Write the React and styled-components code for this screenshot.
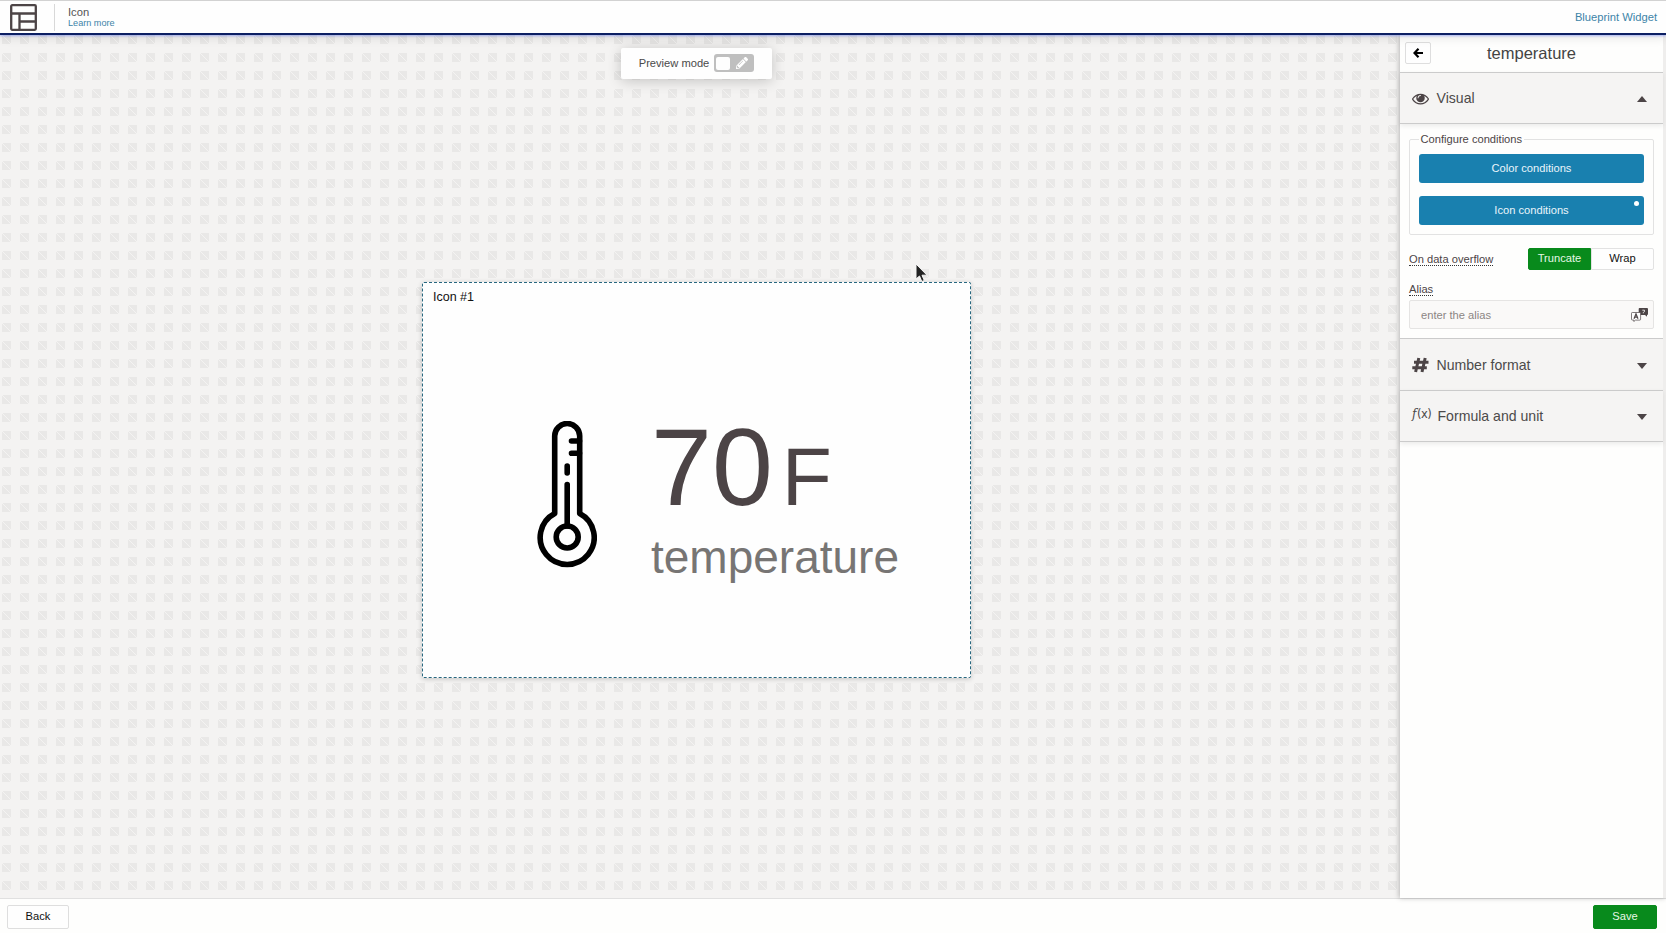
import React from "react";
import styled, { createGlobalStyle, css } from "styled-components";
import { FaPencilAlt } from "react-icons/fa";

const Global = createGlobalStyle`
  * { box-sizing: border-box; }
  body { margin: 0; overflow: hidden; font-family: "Liberation Sans", Arial, sans-serif; color: #4c4446; }
  button, input { font: inherit; }
`;

const Page = styled.div`
  display: flex;
  flex-direction: column;
  width: 100vw;
  height: 100vh;
  background: #fefefd;
`;

const Header = styled.header`
  position: relative;
  z-index: 3;
  display: flex;
  align-items: center;
  flex: none;
  height: 35px;
  padding: 0 9px 0 10px;
  background: #fefefe;
  border-top: 1px solid #d2d2d2;
  border-bottom: 2px solid #0c1f63;
  box-shadow: 0 1px 2px rgba(70, 100, 255, 0.4), 0 2px 10px rgba(0, 0, 0, 0.12);
`;

const Divider = styled.span`
  width: 1px;
  height: 27px;
  margin: 0 13px 0 17px;
  background: #d8d8d8;
`;

const Heading = styled.div`
  display: flex;
  flex: 1;
  flex-direction: column;
  padding-bottom: 1px;
  font-size: 11.2px;
  line-height: 12px;
  color: #555;
`;

const Link = styled.a`
  font-size: ${(p) => p.$size || 11.2}px;
  line-height: ${(p) => (p.$size ? 10 : 12)}px;
  color: #3d84a8;
`;

const Body = styled.div`
  display: flex;
  flex: 1;
  min-height: 0;
`;

const Canvas = styled.main`
  display: flex;
  flex: 1;
  flex-direction: column;
  align-items: center;
  padding: 13px 7px 0 0;
  background: #f4f3f2 url("data:image/svg+xml,%3Csvg xmlns='http://www.w3.org/2000/svg' width='18' height='18'%3E%3Cpath d='M0 0h9v9H0z' fill='%23e9e8e7'/%3E%3Cpath d='M0 0l9 9' stroke='%23f5f4f3' stroke-width='.9'/%3E%3C/svg%3E") 2px 0;
`;

const PreviewBar = styled.div`
  display: flex;
  align-items: center;
  height: 31px;
  padding: 0 17.5px;
  gap: 5px;
  font-size: 11.15px;
  color: #4a4a4a;
  background: #fefefe;
  border-radius: 2px;
  box-shadow: 0 2px 14px rgba(0, 0, 0, 0.2);
`;

const PreviewLabel = styled.span`
  padding-bottom: 2px;
`;

const Toggle = styled.span`
  display: flex;
  align-items: center;
  justify-content: space-between;
  width: 40px;
  height: 18px;
  margin-bottom: 1px;
  padding: 0 6px 0 2px;
  color: #fff;
  background: #bfbfbf;
  border-radius: 3px;
  &::before {
    content: "";
    width: 14px;
    height: 13px;
    background: #fefefe;
    border-radius: 2px;
  }
`;

const Card = styled.section`
  display: flex;
  flex-direction: column;
  width: 549px;
  height: 396px;
  margin-top: 203px;
  background: #fefefe;
  border: 1px dashed #27677f;
  border-radius: 2px;
  box-shadow: 0 1px 5px rgba(0, 0, 0, 0.2);
`;

const CardTitle = styled.div`
  padding: 7px 10px 0;
  font-size: 12.5px;
  line-height: 15px;
  color: #111;
`;

const Reading = styled.div`
  display: flex;
  padding: 116px 0 0 114px;
  gap: 54px;
`;

const Figures = styled.div`
  display: flex;
  flex-direction: column;
`;

const Amount = styled.div`
  display: flex;
  align-items: baseline;
  gap: 9px;
  height: 110px;
  font-size: 109.5px;
  line-height: 92px;
  color: #4c4446;
`;

const Unit = styled.span`
  font-size: 82px;
`;

const Caption = styled.div`
  font-size: 46px;
  line-height: 52px;
  color: #777574;
`;

const Sidebar = styled.aside`
  position: relative;
  z-index: 2;
  width: 266px;
  background: #fefefd;
  border-right: 3px solid #efeeed;
  box-shadow: -1px 0 5px rgba(0, 0, 0, 0.25);
`;

const PanelTitle = styled.div`
  display: flex;
  align-items: center;
  height: 37px;
  padding: 0 5px;
  font-size: 16.5px;
  color: #444;
  span { flex: 1; padding-right: 26px; text-align: center; }
`;

const BackArrow = styled.button`
  display: grid;
  place-items: center;
  width: 26px;
  height: 22px;
  margin-bottom: 1px;
  padding: 0;
  background: #fefefe;
  border: 1px solid #dedede;
  border-radius: 2px;
`;

const SectionHead = styled.div`
  display: flex;
  align-items: center;
  height: ${(p) => p.$height}px;
  padding: 0 15px 0 12px;
  font-size: 14.1px;
  color: #4c4a4a;
  background: #f5f4f3;
  border-top: 1px solid #cbcbcb;
  ${(p) => p.$last && css`
    border-bottom: 1px solid #cbcbcb;
    box-shadow: 0 2px 5px rgba(0, 0, 0, 0.08);
  `}
`;

const HeadIcon = styled.span`
  display: flex;
  flex: none;
  width: ${(p) => p.$width || 24.5}px;
`;

const Caret = styled.i`
  margin: 2px 1px 0 auto;
  border: 5px solid transparent;
  ${(p) => p.$up ? "border-top: 0; border-bottom: 6px solid #4c4446;" : "border-bottom: 0; border-top: 6px solid #4c4446;"}
`;

const Settings = styled.div`
  height: 214px;
  padding: 9px 9px 0;
  font-size: 11.15px;
`;

const Fieldset = styled.fieldset`
  display: flex;
  flex-direction: column;
  gap: 13px;
  height: 102px;
  margin: 0;
  padding: 8px 9px 0;
  border: 1px solid #e2e2e2;
  border-radius: 2px;
  legend { height: 13px; margin-left: 0; padding: 0 1.5px; line-height: 13px; }
`;

const ConditionButton = styled.button`
  position: relative;
  flex: none;
  height: 29px;
  padding: 0 0 2px;
  color: #e9f5fb;
  background: #1980af;
  border: 0;
  border-radius: 3px;
`;

const Dot = styled.span`
  position: absolute;
  top: 5px;
  right: 5px;
  width: 5px;
  height: 5px;
  background: #fff;
  border-radius: 50%;
`;

const Field = styled.div`
  display: flex;
  align-items: center;
  justify-content: space-between;
  height: 22px;
  margin-top: 13px;
`;

const Hint = styled.span`
  display: inline-block;
  line-height: 12px;
  border-bottom: 1px dotted #333;
`;

const Segments = styled.div`
  display: flex;
  width: 126px;
  height: 22px;
`;

const Segment = styled.button`
  flex: 1;
  padding: 0 0 2px;
  color: ${(p) => (p.$active ? "#e6f7e6" : "#111")};
  background: ${(p) => (p.$active ? "#088a1c" : "#fefefe")};
  border: 1px solid ${(p) => (p.$active ? "#088a1c" : "#e2e2e2")};
  border-radius: ${(p) => (p.$active ? "2px 0 0 2px" : "0 2px 2px 0")};
`;

const AliasLabel = styled.div`
  display: flex;
  height: 17px;
  margin-top: 13px;
`;

const AliasBox = styled.div`
  display: flex;
  align-items: center;
  height: 29px;
  padding: 0 5px 0 11px;
  background: #faf9f8;
  border: 1px solid #e5e4e3;
  border-radius: 2px;
`;

const AliasInput = styled.input`
  flex: 1;
  min-width: 0;
  padding: 0;
  background: none;
  border: 0;
  &::placeholder { color: #8c8684; opacity: 1; }
`;

const Footer = styled.footer`
  display: flex;
  flex: none;
  align-items: flex-start;
  justify-content: space-between;
  height: 35px;
  padding: 6px 9px 0 7px;
  background: #fefefd;
  border-top: 1px solid #e0e0e0;
`;

const FooterButton = styled.button`
  width: ${(p) => (p.$primary ? 64 : 62)}px;
  height: 24px;
  padding: 0 0 2px;
  font-size: 11.15px;
  color: ${(p) => (p.$primary ? "#e6f7e6" : "#111")};
  background: ${(p) => (p.$primary ? "#088a1c" : "#fefefe")};
  border: 1px solid ${(p) => (p.$primary ? "#088a1c" : "#dedede")};
  border-radius: 2px;
`;

const Pointer = styled.svg`
  position: fixed;
  z-index: 5;
  left: 915px;
  top: 263px;
`;

const LayoutLogo = () => (
  <svg width="27" height="27" viewBox="0 0 27 27" fill="none" stroke="#4c4446" strokeWidth="2.300">
    <rect x="1.200" y="1.200" width="24.600" height="24.600" rx="1" />
    <path d="M1 9.500h25M9.500 9.500V26M9.500 17.500H26" />
  </svg>
);

const Thermometer = () => (
  <svg width="60" height="147" viewBox="0 0 60 147" fill="none" stroke="#000" strokeWidth="5.600" strokeLinecap="round" strokeLinejoin="round">
    <path d="M17.700 92.500V15a12.500 12.500 0 0 1 25 0v77.500a27 27 0 1 1-25 0z" />
    <circle cx="30.200" cy="116" r="11" />
    <path d="M30.200 105V63.500M30.200 52v-7M42.500 32.300H34.500M42.500 20H34.500" />
  </svg>
);

const ArrowIcon = () => (
  <svg width="10" height="10" viewBox="0 0 10 10" fill="none" stroke="#000" strokeWidth="2.200">
    <path d="M5.500.8L1.500 5l4 4.200M1.500 5H10" />
  </svg>
);

const EyeIcon = () => (
  <svg width="17" height="17" viewBox="0 0 1792 1792" fill="#4c4446">
    <path d="M1664 960q-152-236-381-353 61 104 61 225 0 185-131.500 316.500t-316.500 131.500-316.500-131.500-131.500-316.500q0-121 61-225-229 117-381 353 133 205 333.500 326.500t434.500 121.500 434.500-121.500 333.500-326.500zM944 576q0-20-14-34t-34-14q-125 0-214.500 89.500t-89.500 214.500q0 20 14 34t34 14 34-14 14-34q0-86 61-147t147-61q20 0 34-14t14-34zM1792 960q0 34-20 69-140 230-376.500 368.500t-499.500 138.500-499.500-139-376.500-368q-20-35-20-69t20-69q140-229 376.500-368t499.500-139 499.500 139 376.500 368q20 35 20 69z" />
  </svg>
);

const HashIcon = () => (
  <svg width="17" height="16" viewBox="0 0 17 16" fill="none" stroke="#4c4446" strokeWidth="3">
    <path d="M6.800 1L3.600 15M13.200 1l-3.200 14M2 5.200h14.500M.3 10.700h14.500" />
  </svg>
);

const Fx = styled.span`
  padding-bottom: 4px;
  font: 11.5px/14px "DejaVu Sans", sans-serif;
  letter-spacing: -0.5px;
  white-space: nowrap;
  em { font-family: "DejaVu Serif", serif; font-size: 12px; padding-right: 1px; }
`;

const TranslateIcon = () => (
  <svg width="17" height="14" viewBox="0 0 17 14" fill="none" stroke="#4c4446">
    <path d="M8.500 0h7.500q1 0 1 1v5q0 1-1 1v1.800L14 7H7.700V1q0-1 .8-1z" fill="#4c4446" stroke="none" />
    <path d="M11.300 2.200h2.200v1.400l-1.200.8v.9" stroke="#fff" strokeWidth=".8" />
    <path d="M1.300 4.500h7.500q.8 0 .8.800v6q0 .8-.8.800H4.500L2.800 13.500V12H1.300q-.8 0-.8-.8V5.300q0-.8.800-.8z" fill="#fefefe" strokeWidth=".7" />
    <path d="M3 10.800l2-5 2 5M3.700 9.200h2.600" strokeWidth="1.200" />
  </svg>
);

export default function App() {
  return (
    <Page>
      <Global />
      <Header>
        <LayoutLogo />
        <Divider />
        <Heading>
          <span>Icon</span>
          <Link $size={9.15}>Learn more</Link>
        </Heading>
        <Link>Blueprint Widget</Link>
      </Header>
      <Body>
        <Canvas>
          <PreviewBar>
            <PreviewLabel>Preview mode</PreviewLabel>
            <Toggle><FaPencilAlt size={12} /></Toggle>
          </PreviewBar>
          <Card>
            <CardTitle>Icon #1</CardTitle>
            <Reading>
              <Thermometer />
              <Figures>
                <Amount>70<Unit>F</Unit></Amount>
                <Caption>temperature</Caption>
              </Figures>
            </Reading>
          </Card>
        </Canvas>
        <Sidebar>
          <PanelTitle>
            <BackArrow><ArrowIcon /></BackArrow>
            <span>temperature</span>
          </PanelTitle>
          <SectionHead $height={52} $last>
            <HeadIcon><EyeIcon /></HeadIcon>Visual<Caret $up />
          </SectionHead>
          <Settings>
            <Fieldset>
              <legend>Configure conditions</legend>
              <ConditionButton>Color conditions</ConditionButton>
              <ConditionButton>Icon conditions<Dot /></ConditionButton>
            </Fieldset>
            <Field>
              <Hint>On data overflow</Hint>
              <Segments>
                <Segment $active>Truncate</Segment>
                <Segment>Wrap</Segment>
              </Segments>
            </Field>
            <AliasLabel><div><Hint>Alias</Hint></div></AliasLabel>
            <AliasBox>
              <AliasInput placeholder="enter the alias" />
              <TranslateIcon />
            </AliasBox>
          </Settings>
          <SectionHead $height={52}>
            <HeadIcon><HashIcon /></HeadIcon>Number format<Caret />
          </SectionHead>
          <SectionHead $height={52} $last>
            <HeadIcon $width={25.5}><Fx><em>f</em>(x)</Fx></HeadIcon>Formula and unit<Caret />
          </SectionHead>
        </Sidebar>
      </Body>
      <Footer>
        <FooterButton>Back</FooterButton>
        <FooterButton $primary>Save</FooterButton>
      </Footer>
      <Pointer width="14" height="20" viewBox="0 0 14 20">
        <path d="M1 1v15l3.500-3 2.300 5.500 2.500-1-2.300-5.300H12z" fill="#222" stroke="#f4f4f4" strokeWidth="1" />
      </Pointer>
    </Page>
  );
}
